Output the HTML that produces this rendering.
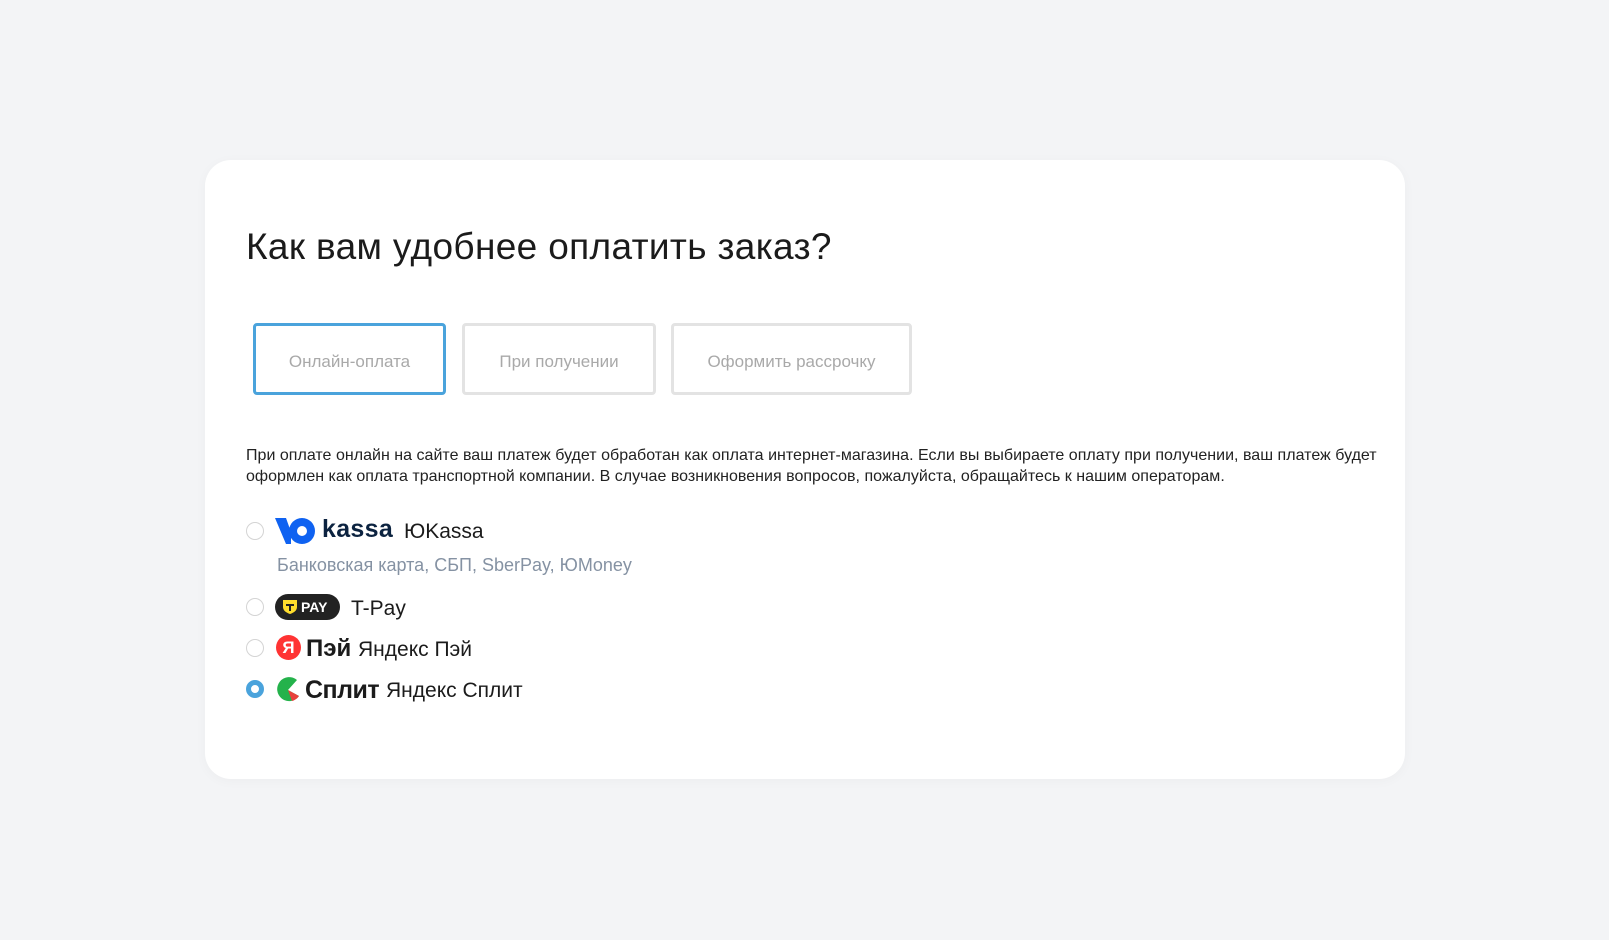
<!DOCTYPE html>
<html><head><meta charset="utf-8"><style>
*{margin:0;padding:0;box-sizing:border-box}
body{width:1609px;height:940px;background:#f3f4f6;font-family:"Liberation Sans",sans-serif;position:relative;overflow:hidden}
.card{position:absolute;left:205px;top:160px;width:1200px;height:619px;background:#fff;border-radius:26px;box-shadow:0 2px 12px rgba(0,0,0,0.03)}
.abs{position:absolute;white-space:nowrap}
h1{position:absolute;left:246px;top:226px;font-size:37px;font-weight:normal;color:#1b1b1b;letter-spacing:0.35px;white-space:nowrap}
.btn{position:absolute;top:323px;height:72px;border:3px solid #e3e3e3;border-radius:4px;color:#a9a9a9;font-size:17px;display:flex;align-items:center;justify-content:center;padding-top:6px}
.btn.on{border-color:#4aa3dc}
.p{position:absolute;left:246px;font-size:16px;color:#222;letter-spacing:0.02px;white-space:nowrap}
.radio{position:absolute;left:246px;width:18px;height:18px;border:1.5px solid #d4d4d4;border-radius:50%}
.radio.on{border:5px solid #4aa3dc}
.lbl{position:absolute;font-size:21px;color:#1b1b1b;white-space:nowrap}
</style></head><body>
<div class="card"></div>
<h1>Как вам удобнее оплатить заказ?</h1>
<div class="btn on" style="left:253px;width:193px">Онлайн-оплата</div>
<div class="btn" style="left:462px;width:194px">При получении</div>
<div class="btn" style="left:671px;width:241px">Оформить рассрочку</div>
<div class="p" style="top:447px">При оплате онлайн на сайте ваш платеж будет обработан как оплата интернет-магазина. Если вы выбираете оплату при получении, ваш платеж будет</div>
<div class="p" style="top:468px">оформлен как оплата транспортной компании. В случае возникновения вопросов, пожалуйста, обращайтесь к нашим операторам.</div>

<div class="radio" style="top:522px"></div>
<svg class="abs" style="left:275px;top:516px" width="42" height="30" viewBox="0 0 42 30"><path d="M0 2h11l5 14v12h-5z" fill="#0f62f1"/><circle cx="27" cy="15" r="13" fill="#0f62f1"/><circle cx="27" cy="15" r="5" fill="#fff"/></svg>
<div class="lbl" style="left:322px;top:515px;font-weight:bold;color:#0c2340;font-size:25px;letter-spacing:0.3px">kassa</div>
<div class="lbl" style="left:404px;top:520px">ЮKassa</div>
<div class="lbl" style="left:277px;top:555px;font-size:18px;color:#8592a3">Банковская карта, СБП, SberPay, ЮMoney</div>

<div class="radio" style="top:598px"></div>
<div class="abs" style="left:275px;top:594px;width:65px;height:26px;border-radius:13px;background:#222;"></div>
<svg class="abs" style="left:282px;top:599px" width="16" height="16" viewBox="0 0 16 16"><path d="M1 1h14v7c0 4-4 6-7 7-3-1-7-3-7-7z" fill="#ffdd2d"/><path d="M4 5h8v2H9v5H7V7H4z" fill="#222"/></svg>
<div class="abs" style="left:301px;top:599px;color:#fff;font-weight:bold;font-size:14px">PAY</div>
<div class="lbl" style="left:351px;top:597px">T-Pay</div>

<div class="radio" style="top:639px"></div>
<div class="abs" style="left:276px;top:635px;width:25px;height:25px;border-radius:50%;background:#f33;color:#fff;font-weight:bold;font-size:17px;text-align:center;line-height:25px">Я</div>
<div class="lbl" style="left:306px;top:635px;font-weight:bold;font-size:24px">Пэй</div>
<div class="lbl" style="left:358px;top:638px">Яндекс Пэй</div>

<div class="radio on" style="top:680px"></div>
<svg class="abs" style="left:275px;top:676px" width="26" height="26" viewBox="0 0 26 26"><path d="M22 4A12 12 0 1 0 24 20L13 14z" fill="#24b24b"/><path d="M13 14l11 6a12 12 0 0 1-7 5z" fill="#e8413c"/></svg>
<div class="lbl" style="left:305px;top:676px;font-weight:bold;font-size:25px;letter-spacing:-0.5px">Сплит</div>
<div class="lbl" style="left:386px;top:679px">Яндекс Сплит</div>
</body></html>
